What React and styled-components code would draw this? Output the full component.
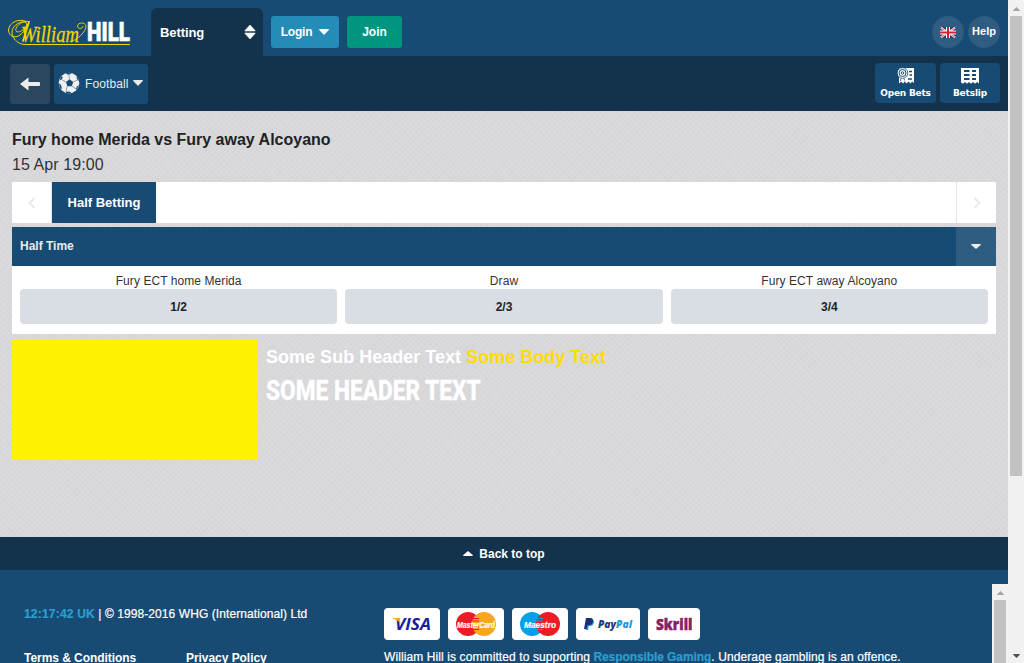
import React from 'react';
import styled, { createGlobalStyle } from 'styled-components';

const Global = createGlobalStyle`
  * { box-sizing: border-box; }
  body { margin: 0; overflow: hidden; font-family: "Liberation Sans", Arial, sans-serif; font-size: 12px; color: #222; }
  button { font: inherit; border: 0; padding: 0; margin: 0; color: inherit; cursor: pointer; }
  svg { display: block; flex: none; overflow: visible; }
`;

const Window = styled.div`display: flex; width: 1024px; height: 663px; overflow: hidden;`;
const Page = styled.div`display: flex; flex-direction: column; width: 1008px; height: 663px; overflow: hidden;`;

const TopBar = styled.header`
  display: flex; flex: none; height: 56px; padding: 0 8px; background: #184b73; color: #fff;
`;
const Brand = styled.a`display: block; width: 143px; padding-top: 10px;`;
const SectionTab = styled.div`
  display: flex; align-items: center; justify-content: space-between;
  width: 112px; height: 48px; margin: 8px 8px 0 0; padding: 0 7px 0 9px;
  background: #13324b; border-radius: 6px 6px 0 0;
  font-weight: bold; font-size: 13px; letter-spacing: -0.1px;
`;
const ActionButton = styled.button`
  display: flex; align-items: center; justify-content: center; gap: 7px;
  width: ${p => p.$width}px; height: 32px; margin: 16px 8px 0 0;
  border-radius: 3px; background: ${p => p.$color};
  font-weight: bold; font-size: 12px; letter-spacing: ${p => p.$track || 0}px;
`;
const RoundTools = styled.div`display: flex; gap: 4px; margin-left: auto; padding-top: 16px;`;
const RoundButton = styled.button`
  display: flex; align-items: center; justify-content: center;
  width: 32px; height: 32px; border-radius: 50%; background: #2f5d81;
  font-weight: bold; font-size: 11px; white-space: nowrap;
  span { padding-bottom: 2px; }
`;

const SubBar = styled.nav`
  display: flex; flex: none; gap: 4px; height: 55px; padding: 7px 8px 0 10px;
  background: #13324b; color: #e8eaec;
`;
const BackButton = styled.button`
  display: flex; align-items: center; justify-content: center;
  width: 40px; height: 40px; margin-top: 1px; border-radius: 3px; background: #2b475d;
`;
const SportButton = styled.button`
  display: flex; align-items: center; width: 94px; height: 40px; margin-top: 1px; padding-left: 4px;
  border-radius: 3px; background: #184b73; font-size: 12px; white-space: nowrap;
  span { margin: 0 4px 0 5px; letter-spacing: 0.1px; }
  svg { margin-top: -2px; }
`;
const SlipTools = styled.div`display: flex; gap: 4px; margin-left: auto;`;
const SlipButton = styled.button`
  display: flex; flex-direction: column; align-items: center;
  width: ${p => p.$width}px; height: 40px; padding-top: 5px; border-radius: 4px;
  background: #184b73; color: #fff; white-space: nowrap;
  font: bold 9px/12px "DejaVu Sans", sans-serif;
  span { margin-top: 3px; letter-spacing: ${p => p.$track || 0}px; }
`;

const Main = styled.main`
  flex: none; height: 426px; padding: 18px 12px 0;
  background:
    repeating-linear-gradient(45deg, rgba(110,110,115,.03) 0 1px, transparent 1px 4px),
    repeating-linear-gradient(-45deg, rgba(110,110,115,.03) 0 1px, transparent 1px 4px),
    #dadadc;
`;
const EventTitle = styled.h1`margin: 0; font-size: 16px; line-height: 22px; height: 25px; color: #222;`;
const EventDate = styled.div`font-size: 16px; line-height: 22px; height: 28px; color: #333; letter-spacing: 0.08px;`;
const TabStrip = styled.div`
  display: flex; height: 41px; margin-bottom: 4px; background: #fff;
`;
const Scroller = styled.button`
  display: flex; align-items: center; justify-content: center; width: 40px; background: #fff;
  border: solid #e4e4e4; border-width: ${p => (p.$end ? '0 0 0 1px' : '0 1px 0 0')};
  margin-left: ${p => (p.$end ? 'auto' : 0)};
`;
const MarketTab = styled.div`
  width: 104px; line-height: 41px; text-align: center; background: #184b73; color: #fff;
  font-weight: bold; font-size: 13px; white-space: nowrap;
`;
const MarketHeader = styled.div`
  display: flex; justify-content: space-between; height: 39px; padding-left: 8px;
  background: #184b73; color: #e8eaec; font-weight: bold; line-height: 38px;
`;
const Collapse = styled.button`
  display: flex; align-items: center; justify-content: center; width: 40px; background: #2f5d81; 
`;
const Selections = styled.div`
  display: grid; grid-template-columns: repeat(3, 1fr); gap: 8px; height: 68px; padding: 7px 8px 10px; background: #fff;
`;
const Selection = styled.div`
  display: flex; flex-direction: column; text-align: center; line-height: 16px; color: #333; letter-spacing: 0.07px;
`;
const Price = styled.button`
  height: 35px; border-radius: 4px; background: #d9dde4; color: #222; font-weight: bold;
`;
const Promo = styled.section`display: flex; align-items: flex-start; gap: 8px; margin-top: 5px;`;
const PromoImage = styled.div`width: 246px; height: 121px; background: #fff200;`;
const PromoCopy = styled.div`color: #fff; white-space: nowrap; padding-top: 7px;`;
const PromoSub = styled.div`
  font-size: 18px; font-weight: bold; line-height: 22px; letter-spacing: 0.02px;
  em { font-style: normal; color: #ffdc00; }
`;
const PromoHead = styled.h2`
  width: max-content; margin: 8px 0 0; font: 800 27px/30px Roboto, "Liberation Sans", sans-serif;
  transform: scaleX(0.84); transform-origin: 0 50%;
  -webkit-text-stroke: 0.3px #fff;
`;

const BackToTop = styled.a`
  display: flex; flex: none; align-items: center; justify-content: center; gap: 6px; height: 33px;
  background: #13324b; color: #fff; font-weight: bold;
`;
const Footer = styled.footer`display: flex; flex: 1; background: #184b73; color: #fff;`;
const Legal = styled.div`flex: none; width: 384px; padding: 36px 0 0 24px; line-height: 16px; white-space: nowrap;`;
const Accent = styled.b`color: #2a9fd0; letter-spacing: ${p => p.$track || 0}px;`;
const Copyright = styled.div`letter-spacing: 0.08px; -webkit-text-stroke: 0.2px;`;
const Links = styled.div`
  display: grid; grid-template-columns: 162px 1fr; margin-top: 28px; font-weight: bold; letter-spacing: -0.05px;
`;
const Payments = styled.div`flex: 1; padding-top: 38px; white-space: nowrap;`;
const Cards = styled.div`display: flex; gap: 8px;`;
const CardBox = styled.div`width: ${p => p.$width}px; height: 32px; border-radius: 4px; background: #fff;`;
const Notice = styled.p`margin: 9px 0 0; line-height: 16px; letter-spacing: 0.1px; -webkit-text-stroke: 0.2px;`;

const Scrollbar = styled.div`
  display: flex; flex-direction: column; align-items: center; flex: none; width: 16px;
  background: #f1f1f1; margin-top: ${p => p.$top || 0}px;
`;
const Thumb = styled.div`width: 12px; height: ${p => p.$height}px; background: #c1c1c1;`;
const ScrollArrow = styled.div`
  display: flex; align-items: center; justify-content: center; width: 16px; height: 16px; padding-top: 2px;
  margin-top: ${p => (p.$end ? 'auto' : 0)};
`;

const Caret = ({ w = 10, h = 6, up, color = '#fff' }) => (
  <svg width={w} height={h} viewBox="0 0 10 6" preserveAspectRatio="none">
    <path d={up ? 'M5 0 10 5.2Q10 6 9 6H1Q0 6 0 5.2Z' : 'M5 6 10 .8Q10 0 9 0H1Q0 0 0 .8Z'} fill={color} />
  </svg>
);

const Logo = () => (
  <svg width="124" height="42" viewBox="8 10 124 42" fill="none">
    <g stroke="#f2d500" strokeLinecap="round">
      <path d="M26 21.500C20 18 9 22 8.500 30C8.500 36 15 39 20 35C25 31 28 25 26 22.500C22 20 12 25 12 32C12 38 16 41 19 43Q21 44.500 26 44.500H129.500" strokeWidth="1" />
      <path d="M29 21.500C20 20 13.500 29 16.500 31.500C20 34 28 26 29 21.500" strokeWidth=".9" />
      <path d="M29 22 23 41" strokeWidth="1.800" />
      <path d="M70 41.500C77 41 86.500 31 86 26C85.500 22 78 22 77.500 26C77.500 29 82.500 29.500 83 26.500" strokeWidth=".9" />
    </g>
    <text x="21" y="41.500" fill="#f2d500" stroke="#f2d500" strokeWidth=".3" fontFamily="Liberation Serif, serif" fontStyle="italic" fontSize="24" textLength="58" lengthAdjust="spacingAndGlyphs">William</text>
    <text x="87" y="41.300" fill="#fff" stroke="#fff" strokeWidth=".6" fontFamily="Roboto, sans-serif" fontWeight="900" fontSize="26" textLength="43" lengthAdjust="spacingAndGlyphs">HILL</text>
  </svg>
);

const Flag = () => (
  <svg width="16" height="11" viewBox="0 0 16 11">
    <path fill="#27367f" d="M0 0h16v11H0z" />
    <path d="M.8 .5 15.200 10.500M15.200 .5 .8 10.500" stroke="#fff" strokeWidth="2" />
    <path d="M.8 .5 15.200 10.500M15.200 .5 .8 10.500" stroke="#d93040" strokeWidth=".7" />
    <path d="M8 0V11M0 5.500H16" stroke="#fff" strokeWidth="4" />
    <path d="M8 0V11M0 5.500H16" stroke="#d4202f" strokeWidth="2" />
  </svg>
);

const Ball = () => (
  <svg width="22" height="22" viewBox="0 0 22 22">
    <circle cx="11" cy="11" r="10.300" fill="#f0f0f0" />
    <g fill="#184b73">
      <path d="M11.500 7.200 15.200 10 13.800 14.200H9.300L8 10Z" />
      <path d="M8 .8 13.500 1 11.500 2.600 9 2.500Z" />
      <path d="M19 4.500 21.300 9 19.500 8 18.500 6Z" />
      <path d="M20.800 13.500 18.500 18 18 16.800 19 14Z" />
      <path d="M8 19.500 12 19.800 13.500 21.300 8 21Z" />
      <path d="M.8 11 3 13 4 17 2 16Z" />
      <path d="M3 4.500 5 5 3.500 7.500 1.500 8.500Z" />
    </g>
    <path d="M11.500 7.500 10.800 2.500M15 10 19.500 8M13.800 14 18 17M9.300 14 8 19.500M8 10 3.500 7.500" fill="none" stroke="#5d7f9a" strokeWidth=".7" />
  </svg>
);

const OpenBetsIcon = () => (
  <svg width="18" height="16" viewBox="0 0 18 16">
    <path d="M2 0H17V15L15.300 13.500 13.500 15.500 11.600 13.500 9.700 15.500 7.800 13.500 6 15.500 4.200 13.500 2 15.500Z" fill="#fff" />
    <path d="M12 3.500h3M12.500 7h2.500M11 11h4" stroke="#184b73" strokeWidth="1.600" />
    <circle cx="5.500" cy="5" r="5.300" fill="#fff" stroke="#184b73" strokeWidth=".8" />
    <circle cx="5.500" cy="5" r="3.500" fill="none" stroke="#184b73" />
    <circle cx="5.500" cy="5" r="1.300" fill="none" stroke="#184b73" />
    <path d="M4 10.500 3.500 13M7 10.500 7.500 12.500" stroke="#184b73" strokeWidth=".8" />
  </svg>
);

const BetslipIcon = () => (
  <svg width="18" height="16" viewBox="0 0 18 16">
    <path d="M0 0H18V15.500L16 14 14 15.800 12 14 10 15.800 8 14 6 15.800 4 14 2 15.800 0 14.500Z" fill="#fff" />
    <path d="M3 3h5.500M3 7h5.500M3 11h5.500M11 3h4M11 7h4M11 11h4" stroke="#184b73" strokeWidth="1.800" />
  </svg>
);

const Chevron = ({ right }) => (
  <svg width="8" height="12" viewBox="0 0 8 12">
    <path d={right ? 'M1.500 1 6.500 6 1.500 11' : 'M6.500 1 1.500 6 6.500 11'} fill="none" stroke="#e9e9e9" strokeWidth="2" />
  </svg>
);

const Visa = () => (
  <svg width="56" height="32" viewBox="0 0 56 32">
    <text x="11" y="22" fontFamily="Open Sans, sans-serif" fontSize="16.500" fontStyle="italic" fontWeight="700" fill="#1a1f9a" textLength="36" lengthAdjust="spacingAndGlyphs">VISA</text>
    <path d="M9 10H14Q15.500 10 15.800 12L16.500 16Q14.500 12 9 10.700Z" fill="#f9a51a" />
  </svg>
);

const Circles = ({ left, right, name, x, width }) => (
  <svg width="56" height="32" viewBox="0 0 56 32">
    <circle cx="20" cy="16" r="12" fill={left} />
    <circle cx="36" cy="16" r="12" fill={right} />
    <path d="M25 10.500h6M24 13h7M24 19h7M25 21.500h6" stroke={left} strokeWidth="1" />
    <text x={x} y="19.500" fontFamily="Liberation Sans, sans-serif" fontSize="9.500" fontStyle="italic" fontWeight="bold" fill="#fff" stroke="#fff" strokeWidth=".2" textLength={width} lengthAdjust="spacingAndGlyphs">{name}</text>
  </svg>
);

const PayPal = () => (
  <svg width="64" height="32" viewBox="0 0 64 32">
    <path d="M12 11.500H16Q18.500 12 17.800 15Q17 18 14 18H12.800L12 22H9.500Z" fill="#179bd7" />
    <path d="M10 10H14.500Q17.500 10 17 13.500Q16.300 17 13 17H11.300L10.500 21H8Z" fill="#1c2e78" />
    <text x="22" y="20" fontFamily="Open Sans, sans-serif" fontSize="11" fontStyle="italic" fontWeight="800" textLength="34" lengthAdjust="spacingAndGlyphs"><tspan fill="#203c80">Pay</tspan><tspan fill="#179bd7">Pal</tspan></text>
  </svg>
);

const Skrill = () => (
  <svg width="52" height="32" viewBox="0 0 52 32">
    <text x="8" y="21.800" fontFamily="Open Sans, sans-serif" fontSize="15" fontWeight="800" fill="#862165" stroke="#862165" strokeWidth=".4" textLength="36.500" lengthAdjust="spacingAndGlyphs">Skrill</text>
  </svg>
);

const selections = [
  ['Fury ECT home Merida', '1/2'],
  ['Draw', '2/3'],
  ['Fury ECT away Alcoyano', '3/4'],
];

export default function App() {
  return (
    <Window>
      <Global />
      <Page>
        <TopBar>
          <Brand><Logo /></Brand>
          <SectionTab>
            <span>Betting</span>
            <svg width="12" height="14" viewBox="0 0 12 14"><path d="M6 0 11 5.500V6H1V5.500ZM6 14 11 8.500V8H1V8.500Z" fill="#fff" stroke="#fff" strokeWidth=".6" /></svg>
          </SectionTab>
          <ActionButton $width={68} $color="#258cb7" $track={-0.2}><span>Login</span><Caret /></ActionButton>
          <ActionButton $width={55} $color="#00957f">Join</ActionButton>
          <RoundTools>
            <RoundButton><Flag /></RoundButton>
            <RoundButton><span>Help</span></RoundButton>
          </RoundTools>
        </TopBar>
        <SubBar>
          <BackButton>
            <svg width="20" height="14" viewBox="0 0 20 14"><path d="M0 7 8.500.5V5H19Q20 5 20 6V8Q20 9 19 9H8.500V13.500Z" fill="#ececec" /></svg>
          </BackButton>
          <SportButton><Ball /><span>Football</span><Caret color="#e8eaec" /></SportButton>
          <SlipTools>
            <SlipButton $width={61} $track={-0.2}><OpenBetsIcon /><span>Open Bets</span></SlipButton>
            <SlipButton $width={60} $track={-0.15}><BetslipIcon /><span>Betslip</span></SlipButton>
          </SlipTools>
        </SubBar>
        <Main>
          <EventTitle>Fury home Merida vs Fury away Alcoyano</EventTitle>
          <EventDate>15 Apr 19:00</EventDate>
          <TabStrip>
            <Scroller><Chevron /></Scroller>
            <MarketTab>Half Betting</MarketTab>
            <Scroller $end><Chevron right /></Scroller>
          </TabStrip>
          <MarketHeader>Half Time<Collapse><Caret h={5} color="#ececec" /></Collapse></MarketHeader>
          <Selections>
            {selections.map(([name, price]) => (
              <Selection key={name}>{name}<Price>{price}</Price></Selection>
            ))}
          </Selections>
          <Promo>
            <PromoImage />
            <PromoCopy>
              <PromoSub>Some Sub Header Text <em>Some Body Text</em></PromoSub>
              <PromoHead>SOME HEADER TEXT</PromoHead>
            </PromoCopy>
          </Promo>
        </Main>
        <BackToTop><Caret up w={10} h={5} />Back to top</BackToTop>
        <Footer>
          <Legal>
            <Copyright><Accent $track={0.2}>12:17:42 UK</Accent> | © 1998-2016 WHG (International) Ltd</Copyright>
            <Links><span>Terms &amp; Conditions</span><span>Privacy Policy</span></Links>
          </Legal>
          <Payments>
            <Cards>
              <CardBox $width={56}><Visa /></CardBox>
              <CardBox $width={56}><Circles left="#ed1c24" right="#faa61a" name="MasterCard" x={9} width={38} /></CardBox>
              <CardBox $width={56}><Circles left="#00a2e5" right="#ed1c24" name="Maestro" x={12} width={32} /></CardBox>
              <CardBox $width={64}><PayPal /></CardBox>
              <CardBox $width={52}><Skrill /></CardBox>
            </Cards>
            <Notice>William Hill is committed to supporting <Accent $track={-0.08}>Responsible Gaming</Accent>. Underage gambling is an offence.</Notice>
          </Payments>
          <Scrollbar $top={14}>
            <ScrollArrow><Caret up w={7} h={4} color="#a3a3a3" /></ScrollArrow>
            <Thumb $height={63} />
          </Scrollbar>
        </Footer>
      </Page>
      <Scrollbar>
        <ScrollArrow><Caret up w={7} h={4} color="#a3a3a3" /></ScrollArrow>
        <Thumb $height={460} />
        <ScrollArrow $end><Caret w={7} h={4} color="#505050" /></ScrollArrow>
      </Scrollbar>
    </Window>
  );
}
